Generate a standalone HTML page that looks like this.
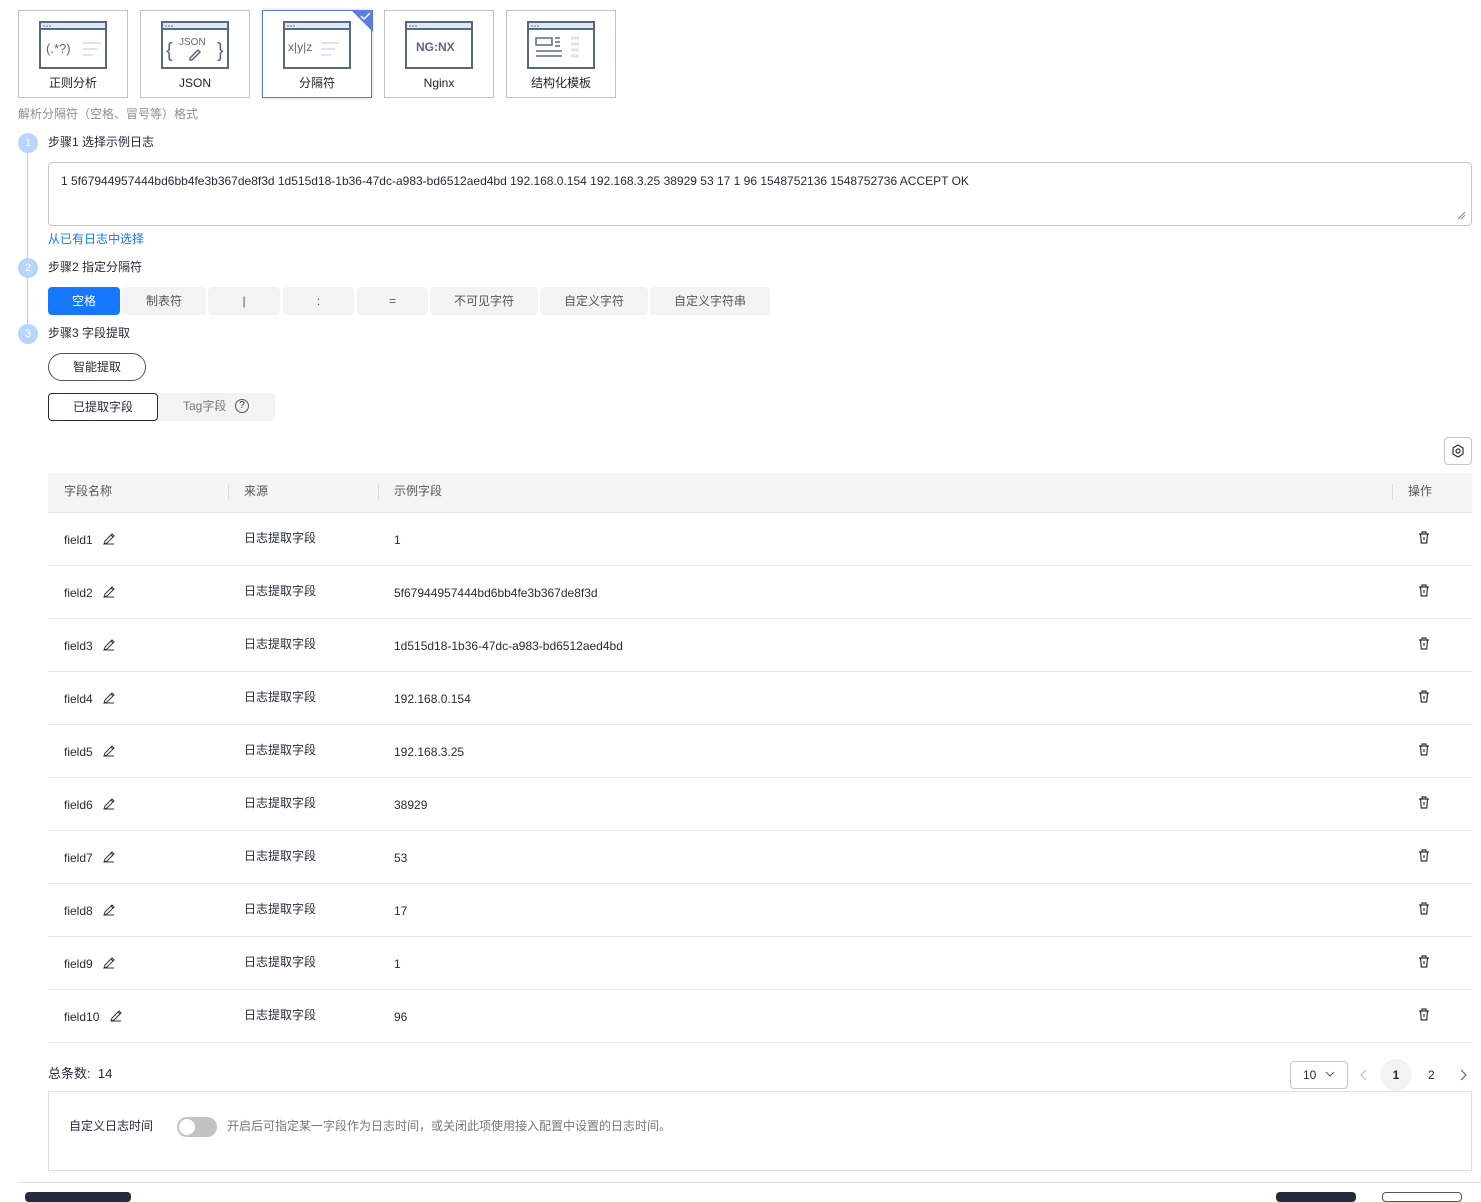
<!DOCTYPE html>
<html><head><meta charset="utf-8"><style>
*{box-sizing:border-box;margin:0;padding:0}
body{width:1481px;height:1194px;overflow:hidden;background:#fff;font-family:"Liberation Sans","Noto Sans CJK SC",sans-serif;font-size:12px;line-height:16px;color:#252b3a;position:relative}
.a{position:absolute}
.card{position:absolute;top:10px;width:110px;height:88px;border:1px solid #c2c2c2;background:#fff}
.card.sel{border-color:#5e7ce0;box-shadow:0 0 3px rgba(94,124,224,.4)}
.card .lbl{position:absolute;top:64px;width:100%;text-align:center;font-size:12px;color:#222}
.card svg{position:absolute;left:20px;top:9px}
.step{position:absolute;left:18px;width:20px;height:20px;border-radius:50%;background:#b7d5ff;color:#fff;font-size:11px;text-align:center;line-height:20px}
.sep{position:absolute;top:287px;height:28px;background:#f3f3f3;border-radius:4px;text-align:center;line-height:28px;color:#555}
.row{position:absolute;left:48px;width:1424px;height:53px;border-bottom:1px solid #e8e8e8}
.row span{position:absolute;top:18px}
</style></head><body>

<div class="card" style="left:18px"><svg width="70" height="50"><rect x="1" y="2" width="66" height="46" fill="#fff" stroke="#5a6884" stroke-width="2"/><rect x="2" y="3" width="64" height="6" fill="#dceaf8"/><line x1="1" y1="9" x2="67" y2="9" stroke="#5a6884" stroke-width="2"/><circle cx="5" cy="6" r=".8" fill="#5a6884"/><circle cx="8" cy="6" r=".8" fill="#5a6884"/><circle cx="11" cy="6" r=".8" fill="#5a6884"/><text x="7" y="33" font-size="13" fill="#5a6884" font-family="Liberation Sans">(.*?)</text><rect x="44" y="22" width="18" height="2" fill="#dde3ee"/><rect x="44" y="28" width="14" height="2" fill="#dde3ee"/><rect x="44" y="34" width="10" height="2" fill="#dde3ee"/></svg><div class="lbl">正则分析</div></div>
<div class="card" style="left:140px"><svg width="70" height="50"><rect x="1" y="2" width="66" height="46" fill="#fff" stroke="#5a6884" stroke-width="2"/><rect x="2" y="3" width="64" height="6" fill="#dceaf8"/><line x1="1" y1="9" x2="67" y2="9" stroke="#5a6884" stroke-width="2"/><circle cx="5" cy="6" r=".8" fill="#5a6884"/><circle cx="8" cy="6" r=".8" fill="#5a6884"/><circle cx="11" cy="6" r=".8" fill="#5a6884"/><text x="5" y="37" font-size="20" fill="#5a6884">{</text><text x="56" y="37" font-size="20" fill="#5a6884">}</text><text x="18" y="25" font-size="10" fill="#5a6884">JSON</text><path d="M29 38l8-8 2 2-8 8h-2z" fill="none" stroke="#5a6884" stroke-width="1.5"/></svg><div class="lbl">JSON</div></div>
<div class="card sel" style="left:262px"><svg width="70" height="50"><rect x="1" y="2" width="66" height="46" fill="#fff" stroke="#5a6884" stroke-width="2"/><rect x="2" y="3" width="64" height="6" fill="#dceaf8"/><line x1="1" y1="9" x2="67" y2="9" stroke="#5a6884" stroke-width="2"/><circle cx="5" cy="6" r=".8" fill="#5a6884"/><circle cx="8" cy="6" r=".8" fill="#5a6884"/><circle cx="11" cy="6" r=".8" fill="#5a6884"/><text x="5" y="31" font-size="12" fill="#5a6884">x|y|z</text><rect x="38" y="22" width="18" height="2" fill="#dde3ee"/><rect x="38" y="28" width="14" height="2" fill="#dde3ee"/><rect x="38" y="34" width="10" height="2" fill="#dde3ee"/></svg><svg class="a" style="left:88px;top:-1px" width="22" height="22"><path d="M0 0H22V22Z" fill="#5e7ce0"/><path d="M10 6l3 3 6-6" stroke="#fff" stroke-width="1.5" fill="none"/></svg><div class="lbl">分隔符</div></div>
<div class="card" style="left:384px"><svg width="70" height="50"><rect x="1" y="2" width="66" height="46" fill="#fff" stroke="#5a6884" stroke-width="2"/><rect x="2" y="3" width="64" height="6" fill="#dceaf8"/><line x1="1" y1="9" x2="67" y2="9" stroke="#5a6884" stroke-width="2"/><circle cx="5" cy="6" r=".8" fill="#5a6884"/><circle cx="8" cy="6" r=".8" fill="#5a6884"/><circle cx="11" cy="6" r=".8" fill="#5a6884"/><text x="11" y="31" font-size="12" font-weight="bold" fill="#5a6884">NG:NX</text></svg><div class="lbl">Nginx</div></div>
<div class="card" style="left:506px"><svg width="70" height="50"><rect x="1" y="2" width="66" height="46" fill="#fff" stroke="#5a6884" stroke-width="2"/><rect x="2" y="3" width="64" height="6" fill="#dceaf8"/><line x1="1" y1="9" x2="67" y2="9" stroke="#5a6884" stroke-width="2"/><circle cx="5" cy="6" r=".8" fill="#5a6884"/><circle cx="8" cy="6" r=".8" fill="#5a6884"/><circle cx="11" cy="6" r=".8" fill="#5a6884"/><rect x="9" y="18" width="16" height="7" fill="none" stroke="#5a6884" stroke-width="1.5"/><path d="M28 18h5M28 22h5M28 26h5M9 31h26M9 36h26" stroke="#5a6884" stroke-width="1.5"/><path d="M44 18h8M44 24h8M44 30h8M44 36h8" stroke="#dde3ee" stroke-width="3"/></svg><div class="lbl">结构化模板</div></div>

<div class="a" style="left:18px;top:106px;color:#8a8e99">解析分隔符（空格、冒号等）格式</div>

<div class="a" style="left:27px;top:150px;width:1px;height:180px;background:#cfcfcf"></div>
<div class="step" style="top:133px">1</div>
<div class="a" style="left:48px;top:134px">步骤1 选择示例日志</div>
<div class="a" style="left:48px;top:162px;width:1424px;height:64px;border:1px solid #c6c6c6;border-radius:4px;padding:10px 12px;color:#252b3a">1 5f67944957444bd6bb4fe3b367de8f3d 1d515d18-1b36-47dc-a983-bd6512aed4bd 192.168.0.154 192.168.3.25 38929 53 17 1 96 1548752136 1548752736 ACCEPT OK</div>
<svg class="a" style="left:1456px;top:210px" width="10" height="10"><path d="M2 9L9 2M5 9L9 5" stroke="#888" stroke-width="1"/></svg>
<div class="a" style="left:48px;top:231px;color:#1476ff">从已有日志中选择</div>
<div class="step" style="top:258px">2</div>
<div class="a" style="left:48px;top:259px">步骤2 指定分隔符</div>
<div class="sep" style="left:48px;width:72px;background:#1677ff;color:#fff">空格</div>
<div class="sep" style="left:122px;width:84px">制表符</div>
<div class="sep" style="left:208px;width:72px">|</div>
<div class="sep" style="left:283px;width:71px">:</div>
<div class="sep" style="left:357px;width:71px">=</div>
<div class="sep" style="left:430px;width:108px">不可见字符</div>
<div class="sep" style="left:540px;width:108px">自定义字符</div>
<div class="sep" style="left:650px;width:120px">自定义字符串</div>
<div class="step" style="top:324px">3</div>
<div class="a" style="left:48px;top:325px">步骤3 字段提取</div>
<div class="a" style="left:48px;top:353px;width:98px;height:28px;border:1px solid #555;border-radius:14px;text-align:center;line-height:26px">智能提取</div>
<div class="a" style="left:48px;top:393px;width:227px;height:28px;background:#f3f3f3;border-radius:4px"></div>
<div class="a" style="left:48px;top:393px;width:110px;height:28px;border:1px solid #252b3a;background:#fff;border-radius:4px;text-align:center;line-height:26px">已提取字段</div>
<div class="a" style="left:183px;top:398px;color:#777">Tag字段</div>
<div class="a" style="left:235px;top:399px;width:14px;height:14px;border:1px solid #555;border-radius:50%;font-size:10px;text-align:center;line-height:12px">?</div>

<div class="a" style="left:1444px;top:437px;width:28px;height:28px;border:1px solid #c6c6c6;border-radius:4px"></div>
<svg class="a" style="left:1451px;top:444px" width="14" height="14" viewBox="0 0 14 14"><path d="M7 1l5 3v6l-5 3-5-3V4z" fill="none" stroke="#333" stroke-width="1.2"/><circle cx="7" cy="7" r="2" fill="none" stroke="#333" stroke-width="1.2"/></svg>

<div class="a" style="left:48px;top:473px;width:1424px;height:40px;background:#f5f5f5;border-bottom:1px solid #e8e8e8"></div>
<div class="a" style="left:64px;top:483px;color:#555">字段名称</div>
<div class="a" style="left:228px;top:484px;width:1px;height:16px;background:#ddd"></div>
<div class="a" style="left:244px;top:483px;color:#555">来源</div>
<div class="a" style="left:378px;top:484px;width:1px;height:16px;background:#ddd"></div>
<div class="a" style="left:394px;top:483px;color:#555">示例字段</div>
<div class="a" style="left:1392px;top:484px;width:1px;height:16px;background:#ddd"></div>
<div class="a" style="left:1408px;top:483px;color:#555">操作</div>

<div id="rows"></div>
<script>
var v=["1","5f67944957444bd6bb4fe3b367de8f3d","1d515d18-1b36-47dc-a983-bd6512aed4bd","192.168.0.154","192.168.3.25","38929","53","17","1","96"];
var h="";
for(var i=0;i<10;i++){var t=513+i*53;var nm="field"+(i+1);var px=i==9?109:102;
h+='<div class="row" style="top:'+t+'px"><span style="left:16px;top:19px">'+nm+'</span><svg class="a" style="left:'+(px-48)+'px;top:19px" width="14" height="14" viewBox="0 0 14 14"><path d="M2 12l1-3 7-7 2 2-7 7z M9 3l2 2 M2 12h10" fill="none" stroke="#333" stroke-width="1"/></svg><span style="left:196px;top:17px">日志提取字段</span><span style="left:346px;top:19px">'+v[i]+'</span><svg class="a" style="left:1370px;top:18px" width="12" height="13" viewBox="0 0 12 13"><path d="M1 3h10M4 3V1h4v2M2.5 3l.8 9h5.4l.8-9M6 6v3" fill="none" stroke="#333" stroke-width="1.2"/></svg></div>';}
document.getElementById("rows").innerHTML=h;
</script>

<div class="a" style="left:48px;top:1066px;font-size:13px">总条数:&nbsp; 14</div>
<div class="a" style="left:1290px;top:1061px;width:58px;height:28px;border:1px solid #c6c6c6;border-radius:4px;padding:5px 0 0 12px">10</div>
<svg class="a" style="left:1325px;top:1071px" width="10" height="7"><path d="M1 1l4 4 4-4" stroke="#555" fill="none"/></svg>
<svg class="a" style="left:1360px;top:1069px" width="8" height="12"><path d="M6 1L1 6l5 5" stroke="#bbb" fill="none"/></svg>
<div class="a" style="left:1380px;top:1059px;width:32px;height:32px;border-radius:50%;background:#f3f3f3;text-align:center;line-height:32px;font-weight:bold">1</div>
<div class="a" style="left:1428px;top:1067px">2</div>
<svg class="a" style="left:1460px;top:1069px" width="8" height="12"><path d="M1 1l5 5-5 5" stroke="#555" fill="none"/></svg>

<div class="a" style="left:48px;top:1091px;width:1424px;height:80px;border:1px solid #dfdfdf"></div>
<div class="a" style="left:69px;top:1118px">自定义日志时间</div>
<div class="a" style="left:177px;top:1117px;width:40px;height:20px;border-radius:10px;background:#c2c2c2"></div>
<div class="a" style="left:179px;top:1119px;width:16px;height:16px;border-radius:50%;background:#fff"></div>
<div class="a" style="left:227px;top:1118px;color:#777">开启后可指定某一字段作为日志时间，或关闭此项使用接入配置中设置的日志时间。</div>
<div class="a" style="left:18px;top:1182px;width:1463px;height:1px;background:#dfdfdf"></div>
<div class="a" style="left:25px;top:1192px;width:106px;height:10px;border-radius:4px;background:#252b3a"></div>
<div class="a" style="left:1276px;top:1192px;width:80px;height:10px;border-radius:4px;background:#252b3a"></div>
<div class="a" style="left:1382px;top:1192px;width:80px;height:10px;border-radius:4px;border:1px solid #555"></div>
</body></html>
